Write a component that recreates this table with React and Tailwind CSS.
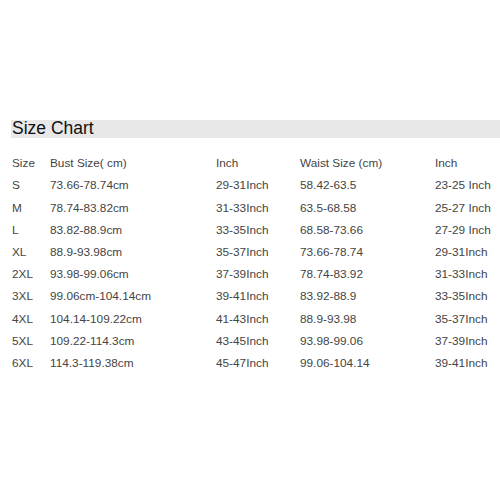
const rows = [
  ['Size', 'Bust Size( cm)', 'Inch', 'Waist Size (cm)', 'Inch'],
  ['S', '73.66-78.74cm', '29-31Inch', '58.42-63.5', '23-25 Inch'],
  ['M', '78.74-83.82cm', '31-33Inch', '63.5-68.58', '25-27 Inch'],
  ['L', '83.82-88.9cm', '33-35Inch', '68.58-73.66', '27-29 Inch'],
  ['XL', '88.9-93.98cm', '35-37Inch', '73.66-78.74', '29-31Inch'],
  ['2XL', '93.98-99.06cm', '37-39Inch', '78.74-83.92', '31-33Inch'],
  ['3XL', '99.06cm-104.14cm', '39-41Inch', '83.92-88.9', '33-35Inch'],
  ['4XL', '104.14-109.22cm', '41-43Inch', '88.9-93.98', '35-37Inch'],
  ['5XL', '109.22-114.3cm', '43-45Inch', '93.98-99.06', '37-39Inch'],
  ['6XL', '114.3-119.38cm', '45-47Inch', '99.06-104.14', '39-41Inch'],
];

export default function App() {
  return (
    <div className="w-[500px] h-[500px] bg-white font-['Liberation_Sans',Arial,sans-serif] text-[#444] pt-[120px]">
      <div className="ml-[11px] h-[18px] bg-[#e8e8e8] flex items-center">
        <span className="pl-[1px] text-[17.5px] leading-none text-[#111]">Size Chart</span>
      </div>

      <div className="mt-[15px] pl-[12px] grid grid-cols-[38px_166px_84px_135px_1fr] text-[11.8px]">
        {rows.map((r, i) =>
          r.map((c, j) => (
            <div key={`${i}-${j}`} className="h-[22.2px] flex items-center whitespace-nowrap">
              {c}
            </div>
          ))
        )}
      </div>
    </div>
  );
}
